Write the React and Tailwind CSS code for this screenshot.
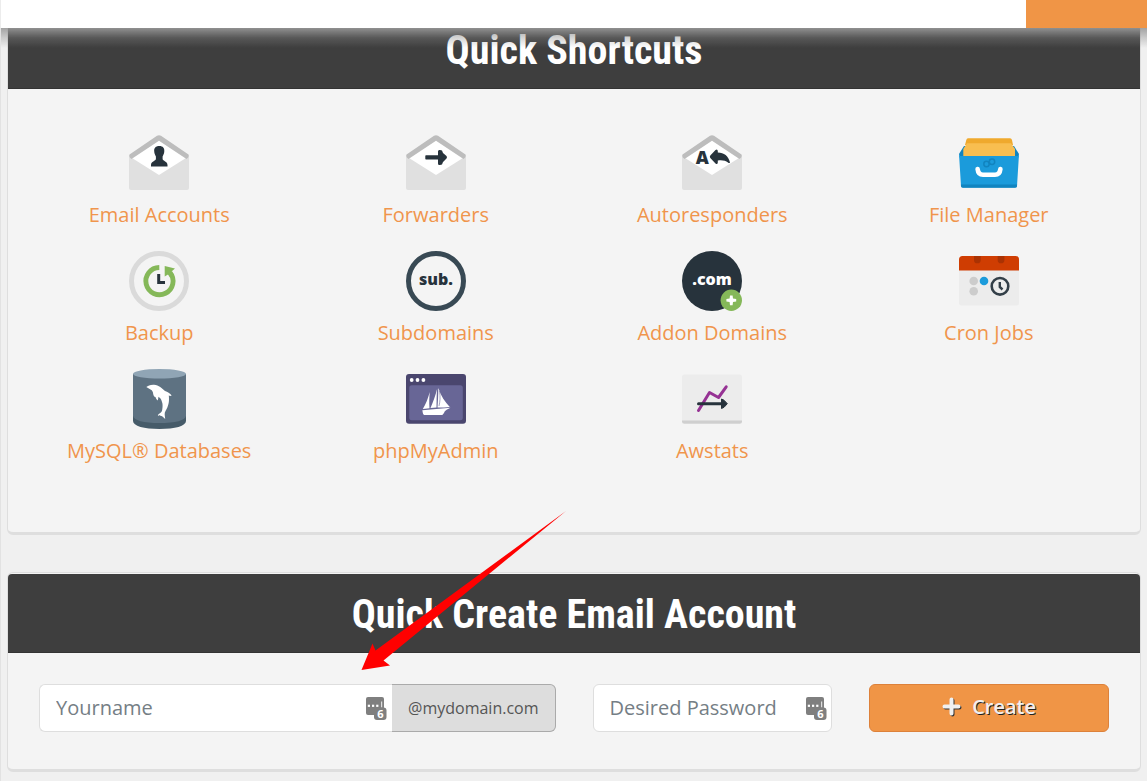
import { useState } from 'react';

const BackEnvelope = ({ children }) => (
  <svg viewBox="0 0 60 60" className="size-[60px]" aria-hidden="true">
    <path d="M0 23 L30 6 L60 23 V55 Q60 57 58 57 H2 Q0 57 0 55 Z" fill="#e0e0e0" />
    <path d="M30 7 L57 25 L30 42 L3 25 Z" fill="#fff" />
    <path d="M0.5 21.500 L28 2.800 Q30 1.500 32 2.800 L59.500 21.500 Q60.500 24 57.500 26 L30 7.700 L2.500 26 Q-0.500 24 0.500 21.500 Z" fill="#bdbdbd" />
    {children}
  </svg>
);

const EmailIcon = () => (
  <BackEnvelope>
    <path
      d="M30.300 13 C34 13 35.500 15.200 35.300 18.200 C35.200 20.700 34.200 22 33.600 23.500 V26 C33.800 28 38.500 28.500 38.500 32 V33.400 H22 V32 C22 28.500 26.700 28 26.900 26 V23.500 C26.300 22 25.300 20.700 25.200 18.200 C25 15.200 26.500 13 30.300 13 Z"
      fill="#27333c"
    />
  </BackEnvelope>
);

const ForwardersIcon = () => (
  <BackEnvelope>
    <path
      d="M20 22.300 H32 V18.500 Q32 16.500 34 17 L36 17.500 L37 20 L40.500 23 Q41.500 24.300 40.500 25.500 L37 29 L36 31.500 L34 32 Q32 32.500 32 30.500 V26.500 H20 Q19.300 26.500 19.300 25.800 V23 Q19.300 22.300 20 22.300 Z"
      fill="#27333c"
    />
  </BackEnvelope>
);

const AutorespondersIcon = () => (
  <BackEnvelope>
    <text x="20.300" y="30.500" textAnchor="middle" className="fill-[#27333c] font-['Open_Sans',sans-serif] text-[18px] font-extrabold">A</text>
    <path
      d="M28.300 22.600 L33.500 17 Q35.500 15.500 35.800 18 V19.500 C42 19.500 46.500 23 48 29.500 Q47 30.500 46 29.500 C43.500 27.500 40 27 35.800 27.500 V29.500 Q35.500 32 33.500 30.500 L28.300 25 Q27.300 23.800 28.300 22.600 Z"
      fill="#27333c"
    />
  </BackEnvelope>
);

const FileManagerIcon = () => (
  <svg viewBox="0 0 60 60" className="size-[60px]" aria-hidden="true">
    <path d="M0 21 L5 13 H55 L60 21 L58 30 H2 Z" fill="#1184bf" />
    <path d="M9 5.300 H51 Q52.500 5.300 53 7 L54 12 H6 L7.300 7 Q7.700 5.300 9 5.300 Z" fill="#efa92d" />
    <path d="M8 10.300 H52 L56 16 V24 H4.300 V16 Z" fill="#f8be50" />
    <path d="M0 21 L1 23 H59 L60 21 L58 53 Q58 54.500 56 54.500 H4 Q2.200 54.500 2 53 Z" fill="#1b9bdb" />
    <path d="M1.900 51.500 H58.100 L58 53 Q58 54.700 56 54.700 H4 Q2 54.700 2 53 Z" fill="#1184bf" />
    <circle cx="27.500" cy="31" r="2.700" fill="none" stroke="#1184bf" strokeWidth="1.500" />
    <circle cx="33" cy="28.800" r="2.700" fill="none" stroke="#1184bf" strokeWidth="1.500" />
    <path d="M18.600 36 C19 40 20.500 41.700 24 41.700 H36 C39.500 41.700 41 40 41.400 36" fill="none" stroke="#fff" strokeWidth="4.600" strokeLinecap="round" />
  </svg>
);

const BackupIcon = () => (
  <svg viewBox="0 0 60 60" className="size-[60px]" aria-hidden="true">
    <circle cx="30" cy="30" r="27.500" fill="none" stroke="#dadada" strokeWidth="5" />
    <path d="M30.300 16.500 A13.600 13.600 0 1 0 41 21.500" fill="none" stroke="#85b859" strokeWidth="4.900" />
    <path d="M35.700 15 L46 17.500 L42.500 20.500 L45 24 L41 26.500 L39 23.500 L35.700 25.500 Z" fill="#85b859" />
    <path d="M29.700 23 V31.500 H36" fill="none" stroke="#27333c" strokeWidth="3" />
  </svg>
);

const SubdomainsIcon = () => (
  <svg viewBox="0 0 60 60" className="size-[60px]" aria-hidden="true">
    <circle cx="30" cy="30" r="27.500" fill="none" stroke="#384954" strokeWidth="5" />
    <text x="30" y="34" textAnchor="middle" className="fill-[#27333c] font-['Open_Sans',sans-serif] text-[16px] font-extrabold">sub.</text>
  </svg>
);

const AddonIcon = () => (
  <svg viewBox="0 0 60 60" className="size-[60px]" aria-hidden="true">
    <circle cx="30" cy="30" r="30" fill="#27333c" />
    <text x="30" y="34" textAnchor="middle" className="fill-white font-['Open_Sans',sans-serif] text-[16px] font-extrabold">.com</text>
    <circle cx="49.300" cy="49.300" r="10.700" fill="#85b859" />
    <path d="M48 44.500 H50.600 L51 47.600 L54.200 48 V50.600 L51 51 L50.600 54.200 H48 L47.600 51 L44.400 50.600 V48 L47.600 47.600 Z" fill="#fff" />
  </svg>
);

const CronIcon = () => (
  <svg viewBox="0 0 60 60" className="size-[60px]" aria-hidden="true">
    <path d="M0 19 H60 V52 Q60 54.500 57.500 54.500 H2.500 Q0 54.500 0 52 Z" fill="#ececec" />
    <path d="M0 19.500 V8.500 Q0 5 3.500 5 H56.500 Q60 5 60 8.500 V19.500 Z" fill="#cf3d02" />
    <path d="M15 5 H21.700 V9 A3.300 3.300 0 0 1 15 9 Z M38.700 5 H45.400 V9 A3.300 3.300 0 0 1 38.700 9 Z" fill="#aa3203" />
    <circle cx="14.700" cy="30" r="4.300" fill="#ccc" />
    <circle cx="25" cy="30" r="4.300" fill="#1b9bdb" />
    <circle cx="14.700" cy="40.300" r="4.300" fill="#ccc" />
    <circle cx="41" cy="35.300" r="8.300" fill="none" stroke="#333f48" strokeWidth="2.600" />
    <path d="M40.800 31 V36 L43.500 38.500" fill="none" stroke="#333f48" strokeWidth="2.400" />
  </svg>
);

const MysqlIcon = () => (
  <svg viewBox="0 0 60 60" className="size-[60px]" aria-hidden="true">
    <path d="M4 40 V52 C4 57 15 60 30.500 60 C46 60 57 57 57 52 V40 Z" fill="#465b69" />
    <path d="M4 5 V46.500 C4 51.500 15 54 30.500 54 C46 54 57 51.500 57 46.500 V5 Z" fill="#5e7282" />
    <ellipse cx="30.500" cy="4.800" rx="26.500" ry="4.800" fill="#90a5b5" />
    <path
      d="M17.300 18 C19 17 21 15.500 25 15.700 C30 15.800 33 19.500 36 22 C38.500 23 41 24 42.700 26.500 C41.500 27.300 40.500 26.800 39.800 26.500 C40.500 33 39.500 37 36.500 42 C35 44 36 47 36.200 50 C34.500 48.500 34 47.500 32.500 47 C31 46.500 30 47 28.800 46.200 C30 44.500 32 43.800 33 42 C34 37 34 34 31.500 29.500 L29.500 27.700 L28.800 31.500 C27 30 26.800 29 26.500 28 C25 28 24.500 26.500 24.200 25 C24 23 23.500 21.500 21.500 20.500 Z"
      fill="#fff"
    />
  </svg>
);

const PhpMyAdminIcon = () => (
  <svg viewBox="0 0 60 60" className="size-[60px]" aria-hidden="true">
    <rect y="5" width="60" height="49.700" rx="3" fill="#4a466e" />
    <rect x="3.300" y="16.300" width="53.500" height="35" rx="2.500" fill="#686696" />
    <circle cx="5.700" cy="11" r="1.900" fill="#fff" />
    <circle cx="11.500" cy="11" r="1.900" fill="#fff" />
    <circle cx="17.400" cy="11" r="1.900" fill="#fff" />
    <path d="M23.800 23 C23.300 28 23 33 23.500 39.200 L16.800 40 C20 35 22 29 23.800 23 Z" fill="#fff" />
    <path d="M31.200 19.500 C30.500 26 30.700 32 30.500 38.500 L24.500 39 C27 33 29.500 27 31.200 19.500 Z" fill="#fff" />
    <path d="M32.300 19 C35 27 39 33 43.800 38 L38 38.500 L31.500 38.500 C32 32 32.300 26 32.300 19 Z" fill="#fff" />
    <path d="M33.500 22 C34.500 28 34 33 33 37" fill="none" stroke="#686696" strokeWidth="0.600" />
    <path d="M16.300 41.300 L44.500 38.800 C42 40.500 39 41 38 44 L36.300 46 H18 C16.500 45 16.800 43 16.300 41.300 Z" fill="#fff" />
  </svg>
);

const AwstatsIcon = () => (
  <svg viewBox="0 0 60 60" className="size-[60px]" aria-hidden="true">
    <rect y="15" width="60" height="39.700" rx="2.500" fill="#cfcfcf" />
    <path d="M0 51.500 V8 Q0 5.500 2.500 5.500 H57.500 Q60 5.500 60 8 V51.500 Z" fill="#ececec" />
    <path d="M16.500 41.500 L27.500 23.500 L36.500 28.500 L44.200 17.800" fill="none" stroke="#963294" strokeWidth="3" strokeLinecap="round" strokeLinejoin="round" />
    <path d="M16.500 34.700 H40" stroke="#27333c" strokeWidth="3" strokeLinecap="round" />
    <path d="M39.500 30 L42 31.200 L45.300 34.700 L42 38.300 L39.500 39.500 Z" fill="#27333c" stroke="#27333c" strokeLinejoin="round" />
  </svg>
);

const shortcuts = [
  { label: 'Email Accounts', Icon: EmailIcon },
  { label: 'Forwarders', Icon: ForwardersIcon },
  { label: 'Autoresponders', Icon: AutorespondersIcon },
  { label: 'File Manager', Icon: FileManagerIcon },
  { label: 'Backup', Icon: BackupIcon },
  { label: 'Subdomains', Icon: SubdomainsIcon },
  { label: 'Addon Domains', Icon: AddonIcon },
  { label: 'Cron Jobs', Icon: CronIcon },
  { label: 'MySQL® Databases', Icon: MysqlIcon },
  { label: 'phpMyAdmin', Icon: PhpMyAdminIcon },
  { label: 'Awstats', Icon: AwstatsIcon },
];

// Password manager badge shown inside the text boxes
const VaultBadge = () => (
  <svg viewBox="0 0 21 23" className="pointer-events-none absolute top-[13px] right-[5px] h-[23px] w-[21px]" aria-hidden="true">
    <rect width="18" height="18" rx="2" fill="#7f7f7f" />
    <rect x="1.800" y="7.700" width="2.200" height="2.200" fill="#fff" />
    <rect x="6" y="7.700" width="2.200" height="2.200" fill="#fff" />
    <rect x="10.200" y="7.700" width="2.200" height="2.200" fill="#fff" />
    <rect x="15" y="4.500" width="1.200" height="6" fill="#ddd" />
    <rect x="8" y="10.500" width="12.500" height="12.500" rx="3" fill="#7f7f7f" />
    <text x="14.300" y="21" textAnchor="middle" className="fill-white font-['Open_Sans',sans-serif] text-[11px] font-bold">6</text>
  </svg>
);

function Panel({ title, children }) {
  return (
    <section className="rounded-md border border-b-[3px] border-[#dedede] bg-[#f4f4f4] pt-px">
      <h2 className="rounded-t-[4px] border-b border-[#333] bg-[#3e3e3e] pt-[17px] pb-[13px] text-center font-['Roboto_Condensed','Roboto',sans-serif] text-[40px] leading-[48px] font-bold text-white">
        {title}
      </h2>
      {children}
    </section>
  );
}

export default function App() {
  const [name, setName] = useState('');
  const [password, setPassword] = useState('');

  return (
    <div className="min-h-screen border-l border-[#e2e2e2] bg-[#f0f0f0] font-['Open_Sans',sans-serif]">
      {/* Top bar stays over the scrolled page */}
      <header className="fixed inset-x-0 top-0 z-10 h-7 border-l border-[#ececec] bg-white">
        <div className="ml-auto h-7 w-[121px] bg-[#f09546]"></div>
        <div className="h-5 bg-linear-to-b from-[#999]/90 via-[#888]/35 to-transparent"></div>
      </header>

      <main className="flex flex-col gap-[37px] px-1.5 pt-2 pb-2">
        <Panel title="Quick Shortcuts">
          <div className="grid grid-cols-4 gap-y-[22px] px-[13px] pt-11 pb-[67px]">
            {shortcuts.map(({ label, Icon }) => (
              <a key={label} href="#" className="flex flex-col items-center gap-2 text-xl leading-7 text-[#f0954c]">
                <Icon />
                {label}
              </a>
            ))}
          </div>
        </Panel>

        <div className="relative">
          <Panel title="Quick Create Email Account">
            <form className="grid grid-cols-4 gap-[37px] px-[31px] pt-[31px] pb-[37px]" onSubmit={(e) => e.preventDefault()}>
              <div className="col-span-2 flex h-12">
                <div className="relative flex-1">
                  <input
                    type="text"
                    aria-label="Yourname"
                    placeholder="Yourname"
                    value={name}
                    onChange={(e) => setName(e.target.value)}
                    className="h-12 w-full rounded-l-md border border-r-0 border-[#dedede] bg-white px-4 pb-0.5 text-xl text-[#555] placeholder:text-[#757e85]"
                  />
                  <VaultBadge />
                </div>
                <span className="flex items-center rounded-r-md border border-l-0 border-[#aaa] bg-[#ddd] px-4 text-base text-[#555]">@mydomain.com</span>
              </div>
              <div className="relative">
                <input
                  type="password"
                  aria-label="Desired Password"
                  placeholder="Desired Password"
                  value={password}
                  onChange={(e) => setPassword(e.target.value)}
                  className="h-12 w-full rounded-md border border-[#dedede] bg-white px-4 pb-0.5 text-xl text-[#555] placeholder:text-[#757e85]"
                />
                <VaultBadge />
              </div>
              <button
                type="submit"
                className="flex h-12 items-center justify-center gap-2.5 rounded-md border border-[#dd813a] bg-[#f09546] pb-0.5 text-xl font-semibold text-[#f0f0f0] [text-shadow:1px_1px_0_#222]"
              >
                <svg viewBox="0 0 20 20" className="size-5" aria-hidden="true">
                  <path d="M10.500 3.500 V17.500 M3.500 10.500 H17.500" stroke="#333" strokeWidth="4" strokeLinecap="round" />
                  <path d="M9.500 2.500 V16.500 M2.500 9.500 H16.500" stroke="#f0f0f0" strokeWidth="4" strokeLinecap="round" />
                </svg>
                Create
              </button>
            </form>
          </Panel>

          {/* Pointer to the name field */}
          <svg viewBox="0 0 206 160" className="pointer-events-none absolute -top-[61px] left-[354px] h-[160px] w-[206px]" aria-hidden="true">
            <path d="M205 0 L14.500 139.500 L11.500 132.500 L0.500 159 L29 154.500 L22.500 149.500 Z" fill="#f00" />
          </svg>
        </div>
      </main>
    </div>
  );
}
